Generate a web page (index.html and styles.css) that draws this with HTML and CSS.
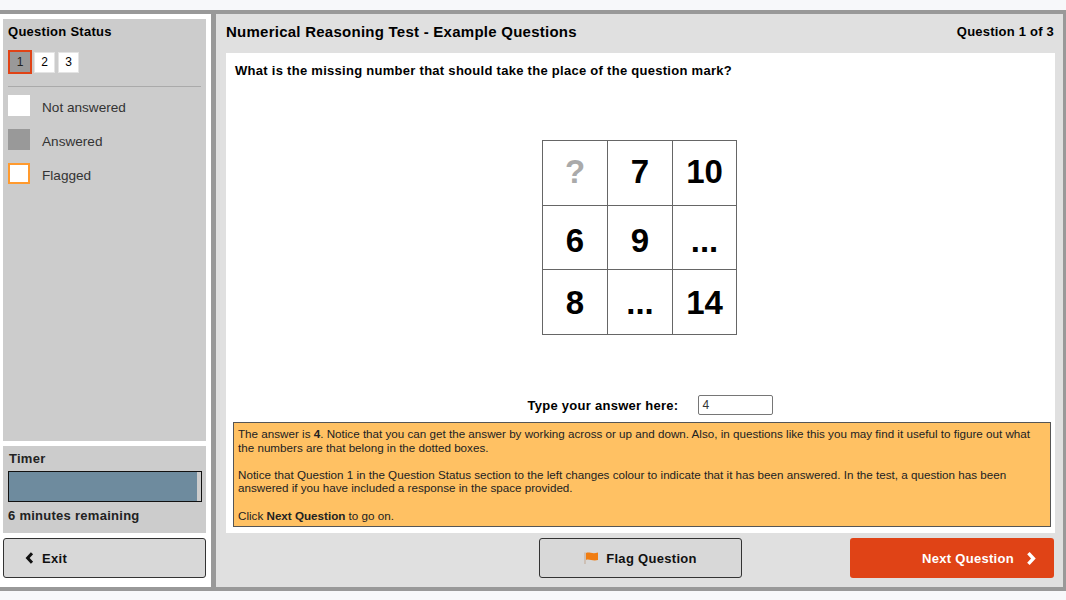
FILE: index.html
```html
<!DOCTYPE html>
<html lang="en">
<head>
  <meta charset="UTF-8" />
  <title>Numerical Reasoning Test</title>
  <link rel="stylesheet" href="styles.css">
</head>
<body>

<div class="frame">
  <!-- Left column -->
  <div class="sidebar">
    <div class="panel status">
      <div class="panel-title">Question Status</div>
      <div class="numbers">
        <span class="num current">1</span>
        <span class="num">2</span>
        <span class="num">3</span>
      </div>
      <div class="legend">
        <div class="legend-row"><span class="swatch"></span><span class="legend-label">Not answered</span></div>
        <div class="legend-row"><span class="swatch answered"></span><span class="legend-label">Answered</span></div>
        <div class="legend-row"><span class="swatch flagged"></span><span class="legend-label">Flagged</span></div>
      </div>
    </div>

    <div class="panel timer">
      <div class="timer-title">Timer</div>
      <div class="timer-bar"><div class="timer-fill"></div></div>
      <div class="timer-text">6 minutes remaining</div>
    </div>

    <button class="btn exit">
      <svg width="9" height="12" viewBox="0 0 9 12"><path d="M7 1.2 L2.6 6 L7 10.8" fill="none" stroke="#111" stroke-width="3"/></svg>
      Exit
    </button>
  </div>

  <!-- Right column -->
  <div class="main">
    <div class="main-head">
      <div class="test-title">Numerical Reasoning Test - Example Questions</div>
      <div class="test-count">Question 1 of 3</div>
    </div>

    <div class="content">
      <div class="question">What is the missing number that should take the place of the question mark?</div>

      <div class="grid">
        <div class="cell top mark">?</div>
        <div class="cell top">7</div>
        <div class="cell top">10</div>
        <div class="cell low">6</div>
        <div class="cell low">9</div>
        <div class="cell low">...</div>
        <div class="cell bottom">8</div>
        <div class="cell bottom">...</div>
        <div class="cell bottom">14</div>
      </div>

      <div class="answer">
        <label class="answer-label" for="answer">Type your answer here:</label>
        <input id="answer" class="answer-input" type="text" value="4" />
      </div>

      <div class="note">
        <p>The answer is <b>4</b>. Notice that you can get the answer by working across or up and down. Also, in questions like this you may find it useful to figure out what the numbers are that belong in the dotted boxes.</p>
        <p>Notice that Question 1 in the Question Status section to the left changes colour to indicate that it has been answered. In the test, a question has been answered if you have included a response in the space provided.</p>
        <p>Click <b>Next Question</b> to go on.</p>
      </div>
    </div>

    <div class="main-foot">
      <button class="btn flag">
        <svg width="15" height="13" viewBox="0 0 15 13"><path d="M1 0.5 V12" stroke="#c9b6a6" stroke-width="1.4"/><path d="M2 1 C5 -0.4 8 2.2 14 0.6 V8 C9 9.6 5 6.6 2 8 Z" fill="#f07d12"/></svg>
        Flag Question
      </button>
      <button class="btn next">
        Next Question
        <svg width="10" height="13" viewBox="0 0 10 13"><path d="M2.4 1.2 L7.4 6.5 L2.4 11.8" fill="none" stroke="#fff" stroke-width="3.4"/></svg>
      </button>
    </div>
  </div>
</div>

</body>
</html>
```

FILE: styles.css
```css
* {
  box-sizing: border-box;
}

body {
  margin: 0;
  background: #f7f8fa;
  font-family: "Liberation Sans", Arial, sans-serif;
  font-size: 13px;
  color: #000;
}

/* Outer grey frame */
.frame {
  display: flex;
  height: 581px;
  margin-top: 10px;
  border-top: 4px solid #999;
  border-bottom: 4px solid #999;
  border-right: 3px solid #999;
  background: #fff;
}

/* Left column */
.sidebar {
  width: 211px;
  flex: none;
  display: flex;
  flex-direction: column;
  gap: 5px;
  padding: 5px 5px 9px 3px;
  background: #fff;
}

.panel {
  background: #ccc;
}

.status {
  flex: 1;
  padding: 5px 5px 0 5px;
}

.panel-title {
  font-weight: bold;
  letter-spacing: 0.27px;
  line-height: 16px;
}

.numbers {
  display: flex;
  align-items: center;
  gap: 3px;
  margin-top: 10px;
  padding-bottom: 12px;
  border-bottom: 1px solid #aaa;
}

.num {
  width: 21px;
  height: 21px;
  background: #fff;
  border: 1px solid #e4e4e4;
  font-size: 12px;
  line-height: 19px;
  text-align: center;
}

.num.current {
  width: 24px;
  height: 24px;
  margin-right: -1px;
  background: #999;
  border: 2px solid #e04316;
  line-height: 20px;
  color: #222;
}

.legend {
  padding-top: 7px;
}

.legend-row {
  display: flex;
  align-items: center;
  gap: 12px;
  height: 22px;
  margin-bottom: 12px;
  color: #333;
  font-size: 13.6px;
}

.legend-label {
  padding-top: 4px;
}

.swatch {
  width: 22px;
  height: 21px;
  background: #fff;
}

.swatch.answered {
  background: #999;
}

.swatch.flagged {
  border: 2px solid #ff9a2e;
}

.timer {
  height: 87px;
  padding: 5px 4px 0 5px;
}

.timer-title {
  margin-left: 1px;
  font-weight: bold;
  line-height: 15px;
  color: #222;
  letter-spacing: 0.27px;
}

.timer-bar {
  height: 31px;
  margin: 5px 0 6px;
  background: #ccc;
  border: 1px solid #111;
}

.timer-fill {
  height: 100%;
  width: 98%;
  background: #6e8b9e;
}

.timer-text {
  font-weight: bold;
  line-height: 15px;
  color: #222;
  letter-spacing: 0.27px;
}

/* Buttons */
.btn {
  display: flex;
  align-items: center;
  height: 40px;
  font-family: "Liberation Sans", Arial, sans-serif;
  font-size: 13px;
  font-weight: bold;
  letter-spacing: 0.3px;
  border-radius: 3px;
  background: #d8d8d8;
  border: 1px solid #333;
  color: #111;
}

.exit {
  flex: none;
  gap: 8px;
  padding: 0 0 0 21px;
}

.flag {
  width: 203px;
  justify-content: center;
  gap: 7px;
}

.next {
  width: 204px;
  justify-content: flex-end;
  gap: 12px;
  padding: 0 18px 0 0;
  background: #e04316;
  border: none;
  color: #fff;
}

/* Right column */
.main {
  flex: 1;
  display: flex;
  flex-direction: column;
  border-left: 5px solid #999;
  background: #e0e0e0;
}

.main-head {
  display: flex;
  justify-content: space-between;
  align-items: center;
  height: 39px;
  padding: 0 9px 4px 10px;
}

.test-title {
  font-size: 15px;
  font-weight: bold;
  letter-spacing: 0.25px;
}

.test-count {
  font-weight: bold;
  letter-spacing: 0.22px;
}

.content {
  flex: 1;
  display: flex;
  flex-direction: column;
  margin: 0 8px 0 10px;
  padding: 0 4px 5px 7px;
  background: #fff;
}

.question {
  margin: 10px 0 0 2px;
  font-weight: bold;
  line-height: 15px;
  letter-spacing: 0.28px;
}

.grid {
  display: grid;
  grid-template-columns: 65px 65px 64px;
  grid-template-rows: 65px 64px 65px;
  align-self: center;
  margin: 62px 5px 0 0;
  border-top: 1px solid #666;
  border-left: 1px solid #666;
}

.cell {
  display: flex;
  justify-content: center;
  align-items: center;
  border-right: 1px solid #666;
  border-bottom: 1px solid #666;
  font-size: 33px;
  font-weight: bold;
}

.cell.top {
  padding-bottom: 2px;
}

.cell.low {
  padding-top: 6px;
}

.cell.bottom {
  padding-top: 2px;
}

.cell.mark {
  color: #aaa;
}

.answer {
  display: flex;
  justify-content: center;
  align-items: center;
  gap: 20px;
  height: 20px;
  margin-top: 60px;
  padding-left: 17px;
}

.answer-label {
  font-weight: bold;
  letter-spacing: 0.27px;
}

.answer-input {
  width: 75px;
  height: 20px;
  padding: 0 3px;
  border: 1px solid #767676;
  border-radius: 2px;
  font-family: "Liberation Sans", Arial, sans-serif;
  font-size: 12px;
  color: #333;
}

.note {
  height: 105px;
  margin-top: 7px;
  padding: 4px 4px 0 4px;
  background: #ffc163;
  border: 1px solid #555;
  font-size: 11.65px;
  line-height: 13.6px;
  color: #222;
}

.note p {
  margin: 0 0 13.6px;
}

.main-foot {
  display: flex;
  gap: 108px;
  height: 54px;
  padding: 5px 9px 0 323px;
}
```
